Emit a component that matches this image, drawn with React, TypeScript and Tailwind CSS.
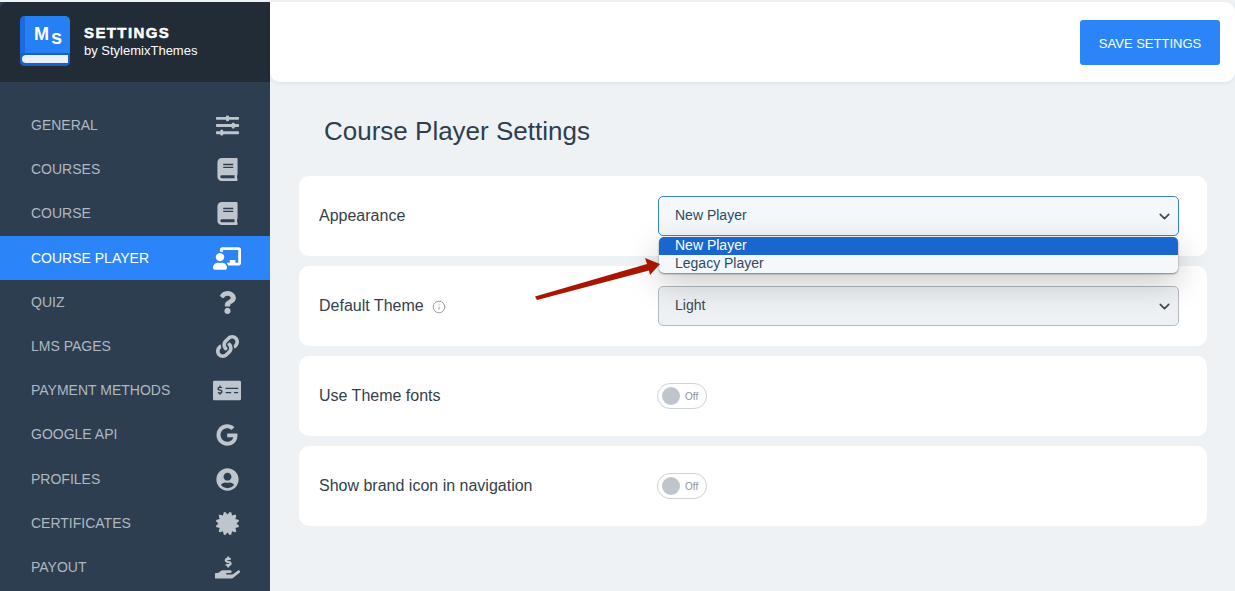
import { ChevronDown, Info } from 'lucide-react'
import { IconType } from 'react-icons'
import {
  FaBook,
  FaCertificate,
  FaChalkboardTeacher,
  FaGoogle,
  FaHandHoldingUsd,
  FaLink,
  FaMoneyCheckAlt,
  FaQuestion,
  FaSlidersH,
  FaUserCircle,
} from 'react-icons/fa'

const navItems: { label: string; icon: IconType; size: string; active?: boolean }[] = [
  { label: 'GENERAL', icon: FaSlidersH, size: 'text-[23px]' },
  { label: 'COURSES', icon: FaBook, size: 'text-[23px]' },
  { label: 'COURSE', icon: FaBook, size: 'text-[23px]' },
  { label: 'COURSE PLAYER', icon: FaChalkboardTeacher, size: 'text-[29px]', active: true },
  { label: 'QUIZ', icon: FaQuestion, size: 'text-[23px]' },
  { label: 'LMS PAGES', icon: FaLink, size: 'text-[23px]' },
  { label: 'PAYMENT METHODS', icon: FaMoneyCheckAlt, size: 'text-[29px]' },
  { label: 'GOOGLE API', icon: FaGoogle, size: 'text-[22px]' },
  { label: 'PROFILES', icon: FaUserCircle, size: 'text-[23px]' },
  { label: 'CERTIFICATES', icon: FaCertificate, size: 'text-[23px]' },
  { label: 'PAYOUT', icon: FaHandHoldingUsd, size: 'text-[25px]' },
]

function Logo() {
  return (
    <div className="relative mt-[-2px] h-[50px] w-[50px] shrink-0 overflow-hidden rounded-[5px] bg-[#2680f5]">
      <div className="absolute left-0 top-0 h-full w-[5px] bg-[#1b6ae0]" />
      <span className="absolute left-[14px] top-[9px] text-[18px] font-bold leading-none text-white">M</span>
      <span className="absolute left-[31px] top-[11px] text-[20px] font-bold leading-none text-white">s</span>
      <div className="absolute bottom-0 left-0 h-[13px] w-full bg-[#1b5fc0]" />
      <div className="absolute bottom-[3px] left-[2px] h-[8px] w-[46px] rounded-l-[4px] bg-[#e8f0fd]" />
    </div>
  )
}

function Sidebar() {
  return (
    <aside className="h-[591px] w-[270px] shrink-0 overflow-hidden bg-[#2d3e50]">
      <div className="flex h-[80px] items-center gap-[14px] rounded-tl-[8px] bg-[#212c37] pl-[20px]">
        <Logo />
        <div className="text-white">
          <div className="text-[15px] font-bold leading-[17px] tracking-[1.4px] [-webkit-text-stroke:0.5px_white]">SETTINGS</div>
          <div className="mt-[1px] text-[13px] leading-[18px]">by StylemixThemes</div>
        </div>
      </div>
      <nav className="pt-[21.5px]">
        {navItems.map(({ label, icon: Icon, size, active }) => (
          <div
            key={label}
            className={`flex h-[44.2px] items-center justify-between pl-[31px] pr-[29px] text-[14px] ${
              active ? 'bg-[#2b85f9] text-white' : 'text-[#b0b8c1]'
            }`}
          >
            <span>{label}</span>
            <span className={`flex w-[28px] justify-center ${size} ${active ? 'text-white' : 'text-[#bec5cc]'}`}>
              <Icon />
            </span>
          </div>
        ))}
      </nav>
    </aside>
  )
}

function Select({ value, focused }: { value: string; focused?: boolean }) {
  return (
    <div
      className={`flex h-[40px] w-[521px] items-center justify-between rounded-[5px] border pl-[16px] pr-[5px] text-[14px] ${
        focused ? 'border-[#3a80d2] bg-[#f4f8fb] text-[#2d4a66]' : 'border-[#b4bac0] bg-[#eef1f4] text-[#3a4654]'
      }`}
    >
      <span className="mt-[-2px]">{value}</span>
      <ChevronDown size={17} strokeWidth={2.25} className="text-[#444]" />
    </div>
  )
}

function Toggle() {
  return (
    <div className="ml-[-1px] flex h-[26px] w-[50px] items-center gap-[5px] rounded-full border border-[#ced3d8] bg-white pl-[4px]">
      <span className="h-[18px] w-[18px] rounded-full bg-[#bec5cc]" />
      <span className="text-[10px] text-[#8b949d]">Off</span>
    </div>
  )
}

function Row({ children, label, hint }: { children: React.ReactNode; label: string; hint?: boolean }) {
  return (
    <div className="flex h-[80px] items-center rounded-[10px] bg-white pl-[20px]">
      <div className="flex w-[339px] shrink-0 items-center gap-[8px] text-[16px] text-[#343f4b]">
        {label}
        {hint && <Info size={14} strokeWidth={1.5} className="mt-[1px] text-[#8d959d]" />}
      </div>
      {children}
    </div>
  )
}

export default function App() {
  return (
    <div className="flex h-[591px] w-[1235px] overflow-hidden bg-[#eff2f5] pt-[2px] font-['Liberation_Sans',Arial,sans-serif]">
      <Sidebar />
      <main className="relative min-w-0 flex-1">
        <header className="flex h-[80px] items-center justify-end rounded-r-[10px] rounded-bl-[10px] bg-white pr-[15px] shadow-[0_1px_4px_rgba(0,0,0,0.08)]">
          <button className="h-[45px] w-[140px] rounded-[3px] bg-[#2b85f9] pt-[3px] text-[13px] text-white">
            SAVE SETTINGS
          </button>
        </header>
        <h1 className="pl-[54px] pt-[33px] text-[26px] leading-[32px] text-[#2d3e50]">Course Player Settings</h1>
        <div className="ml-[29px] mt-[29px] flex w-[908px] flex-col gap-[10px]">
          <Row label="Appearance">
            <Select value="New Player" focused />
          </Row>
          <Row label="Default Theme" hint>
            <Select value="Light" />
          </Row>
          <Row label="Use Theme fonts">
            <Toggle />
          </Row>
          <Row label="Show brand icon in navigation">
            <Toggle />
          </Row>
        </div>

        {/* open dropdown list */}
        <div className="absolute left-[389px] top-[235px] w-[519px] overflow-hidden rounded-[5px] bg-[#f4f8fb] text-[14px] leading-[16px] text-[#2d4a66] shadow-[0_1px_2px_rgba(0,0,0,0.45),0_10px_32px_rgba(0,0,0,0.22)]">
          <div className="h-[18px] bg-[#1a66cf] pl-[16px] text-white">New Player</div>
          <div className="h-[18px] pl-[16px]">Legacy Player</div>
        </div>

        {/* annotation arrow */}
        <svg className="absolute left-[260px] top-[250px]" width="140" height="60" viewBox="0 0 140 60">
          <path d="M5 44.5 L117 12 L115 6 L130 12 L120 23 L119 18.5 L7 48 Z" fill="#a81500" />
        </svg>
      </main>
    </div>
  )
}
